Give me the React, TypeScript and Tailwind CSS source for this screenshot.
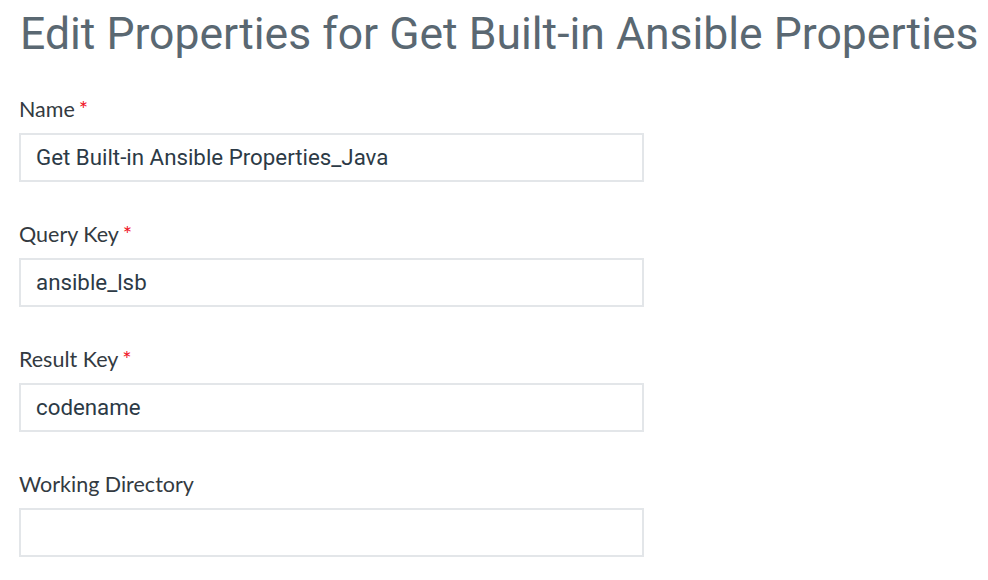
import React from "react";

const fields = [
  { label: "Name", required: true, value: "Get Built-in Ansible Properties_Java" },
  { label: "Query Key", required: true, value: "ansible_lsb" },
  { label: "Result Key", required: true, value: "codename" },
  { label: "Working Directory", required: false, value: "" },
];

export default function App() {
  return (
    <div className="min-h-[580px] w-[988px] bg-white pl-[19px] pt-[6px]">
      <h1 className="whitespace-nowrap pl-[1px] text-[44.5px] leading-[56px] text-[#5a6872] [font-family:Roboto,sans-serif]">
        Edit Properties for Get Built-in Ansible Properties
      </h1>
      <div className="mt-[35px] flex flex-col gap-[40px]">
        {fields.map((f) => (
          <div key={f.label} className="flex flex-col">
            <label className="flex items-start gap-[4px] text-[21.5px] leading-[24px] text-[#333a41] [font-family:Lato,sans-serif]">
              {f.label}
              {f.required && <span className="text-[22px] text-[#f0121f]">*</span>}
            </label>
            <div className="mt-3 flex h-[49px] w-[625px] items-center border-2 border-[#e3e6e9] px-[15px] text-[22.3px] text-[#2c3a46] [font-family:Roboto,sans-serif]">
              {f.value}
            </div>
          </div>
        ))}
      </div>
    </div>
  );
}
